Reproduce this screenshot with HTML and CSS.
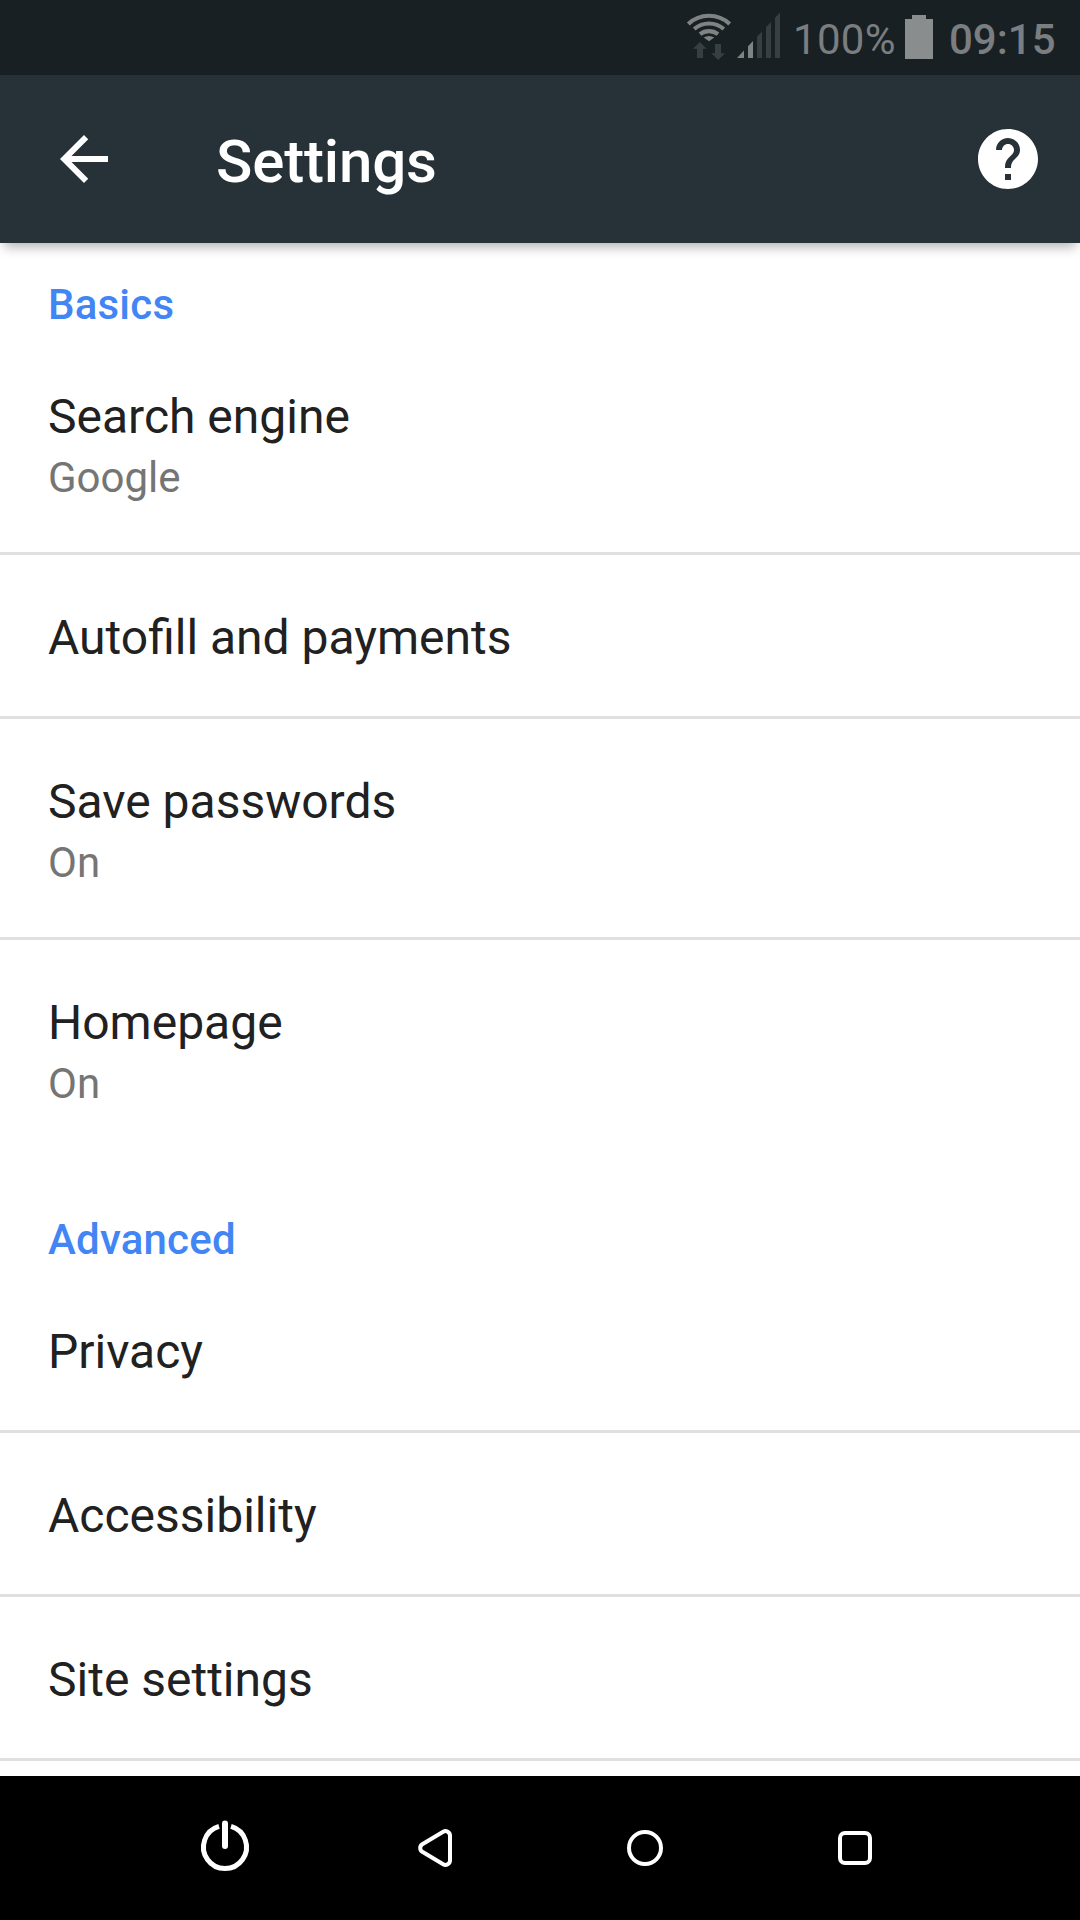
FILE: index.html
```html
<!DOCTYPE html>
<html lang="en">
<head>
<meta charset="utf-8">
<title>Settings</title>
<link rel="stylesheet" href="styles.css">
</head>
<body>
<div class="screen">
  <div class="status-bar">
    <svg class="status-wifi" width="40" height="48" viewBox="686 13 40 48" aria-hidden="true">
      <g fill="none" stroke="#7f8384" stroke-width="4.100">
        <path d="M688.3 23.9A30.5 30.5 0 0 1 729.7 23.9"/>
        <path d="M694.2 29A22.5 22.5 0 0 1 723.8 29"/>
        <path d="M700 34.100A15 15 0 0 1 718 34.100"/>
      </g>
      <path fill="#7f8384" d="M703.7 37.600Q709 34.3 714.3 37.600L709 41.3z"/>
      <path fill="#383f42" d="M699.8 42L706.7 48.7H703V58H697V48.7H693zM715 44H721V53.3H725L718.2 60L711.3 53.3H715z"/>
    </svg>
    <svg class="status-signal" width="43" height="48" viewBox="737 12 43 48" aria-hidden="true">
      <path fill="#7f8384" d="M737 58L744 50.5V58zM748 46.2L753 41V58H748z"/>
      <path fill="#383f42" d="M757 36.8L762 31.5V58H757zM766 27.2L771 22V58H766zM775 17.8L780 12.5V58H775z"/>
    </svg>
    <span class="battery-level">100%</span>
    <svg class="status-battery" width="28" height="44" viewBox="0 0 28 44" aria-hidden="true">
      <path fill="#8a8d8e" d="M7 0H21V4H28V44H0V4H7z"/>
    </svg>
    <span class="clock">09:15</span>
  </div>

  <header class="toolbar">
    <svg class="toolbar-icon" viewBox="0 0 24 24" role="img" aria-label="Back">
      <path d="M20 11H7.83l5.59-5.59L12 4l-8 8 8 8 1.41-1.41L7.83 13H20v-2z"/>
    </svg>
    <h1 class="toolbar-title">Settings</h1>
    <svg class="toolbar-icon" viewBox="0 0 24 24" role="img" aria-label="Help">
      <path d="M12 2C6.48 2 2 6.48 2 12s4.48 10 10 10 10-4.48 10-10S17.52 2 12 2zm1 17h-2v-2h2v2zm2.07-7.75l-.9.92C13.45 12.9 13 13.5 13 15h-2v-.5c0-1.1.45-2.1 1.17-2.83l1.24-1.26c.37-.36.59-.86.59-1.41 0-1.1-.9-2-2-2s-2 .9-2 2H8c0-2.21 1.79-4 4-4s4 1.79 4 4c0 .88-.36 1.68-.93 2.25z"/>
    </svg>
  </header>

  <main class="settings">
    <section class="group">
      <h2 class="group-title">Basics</h2>
      <div class="row"><div class="row-title">Search engine</div><div class="row-summary">Google</div></div>
      <div class="row"><div class="row-title">Autofill and payments</div></div>
      <div class="row"><div class="row-title">Save passwords</div><div class="row-summary">On</div></div>
      <div class="row"><div class="row-title">Homepage</div><div class="row-summary">On</div></div>
    </section>
    <section class="group">
      <h2 class="group-title">Advanced</h2>
      <div class="row"><div class="row-title">Privacy</div></div>
      <div class="row"><div class="row-title">Accessibility</div></div>
      <div class="row"><div class="row-title">Site settings</div></div>
      <div class="row"></div>
    </section>
  </main>

  <nav class="nav-bar">
    <svg class="nav-icon" viewBox="0 0 60 60" role="img" aria-label="Power">
      <path stroke-width="5" d="M24 8.4A21.5 21.5 0 1 0 36 8.4"/>
      <path stroke-width="6" stroke-linecap="round" d="M30 5.5V28"/>
    </svg>
    <svg class="nav-icon" viewBox="0 0 60 60" role="img" aria-label="Back">
      <path stroke-width="4" d="M45 17.500V42.500A4.500 4.500 0 0 1 38.200 46.300L17.300 33.800A4.500 4.500 0 0 1 17.300 26.200L38.200 13.700A4.500 4.500 0 0 1 45 17.500Z"/>
    </svg>
    <svg class="nav-icon" viewBox="0 0 60 60" role="img" aria-label="Home">
      <circle stroke-width="4" cx="30" cy="30" r="16"/>
    </svg>
    <svg class="nav-icon" viewBox="0 0 60 60" role="img" aria-label="Recent apps">
      <rect stroke-width="4" x="15" y="15" width="30" height="30" rx="5"/>
    </svg>
  </nav>
</div>
</body>
</html>
```
FILE: styles.css
```css
* {
  box-sizing: border-box;
}

body {
  margin: 0;
  background: #fff;
  color: #212121;
  font-family: Roboto, "Noto Sans", sans-serif;
}

svg {
  display: block;
  flex: none;
}

.screen {
  display: flex;
  flex-direction: column;
  width: 1080px;
  height: 1920px;
  overflow: hidden;
}

.status-bar {
  flex: none;
  display: flex;
  justify-content: flex-end;
  height: 75px;
  padding-right: 24px;
  background: #182023;
  color: #7a7e80;
  font-size: 42px;
  line-height: 49px;
}

.status-wifi {
  margin: 13px 11px 0 0;
  overflow: visible;
}

.status-signal {
  margin: 12px 13px 0 0;
}

.battery-level,
.clock {
  padding-top: 15px;
}

.battery-level {
  width: 112px;
  letter-spacing: 0.3px;
}

.status-battery {
  margin: 15px 16px 0 0;
}

.clock {
  width: 107px;
  font-weight: 500;
}

.toolbar {
  flex: none;
  position: relative;
  display: flex;
  align-items: center;
  height: 168px;
  padding: 0 36px 0 48px;
  background: #273238;
  color: #fff;
  box-shadow: 0 8px 11px -4px rgba(0, 0, 0, 0.3);
}

.toolbar-icon {
  width: 72px;
  height: 72px;
  fill: #fff;
}

.toolbar-title {
  flex: 1;
  margin: 5px 0 0 96px;
  font-size: 60px;
  font-weight: 500;
  letter-spacing: -0.15px;
  line-height: 70px;
}

.settings {
  flex: 1;
  min-height: 0;
  overflow: hidden;
}

.group + .group {
  padding-top: 20px;
}

.group-title {
  margin: 0;
  padding: 37px 48px 5px;
  color: #4285f4;
  font-size: 42px;
  font-weight: 500;
  letter-spacing: 0.2px;
  line-height: 49px;
}

.row {
  padding: 55px 48px 50px;
}

.row + .row {
  border-top: 3px solid #e0e0e0;
}

.row-title {
  font-size: 48px;
  line-height: 56px;
}

.row-summary {
  margin-top: 8px;
  color: #757575;
  font-size: 42px;
  line-height: 49px;
}

.nav-bar {
  flex: none;
  display: flex;
  justify-content: center;
  gap: 150px;
  height: 144px;
  padding-top: 42px;
  background: #000;
}

.nav-icon {
  width: 60px;
  height: 60px;
  fill: none;
  stroke: #fff;
}
```
